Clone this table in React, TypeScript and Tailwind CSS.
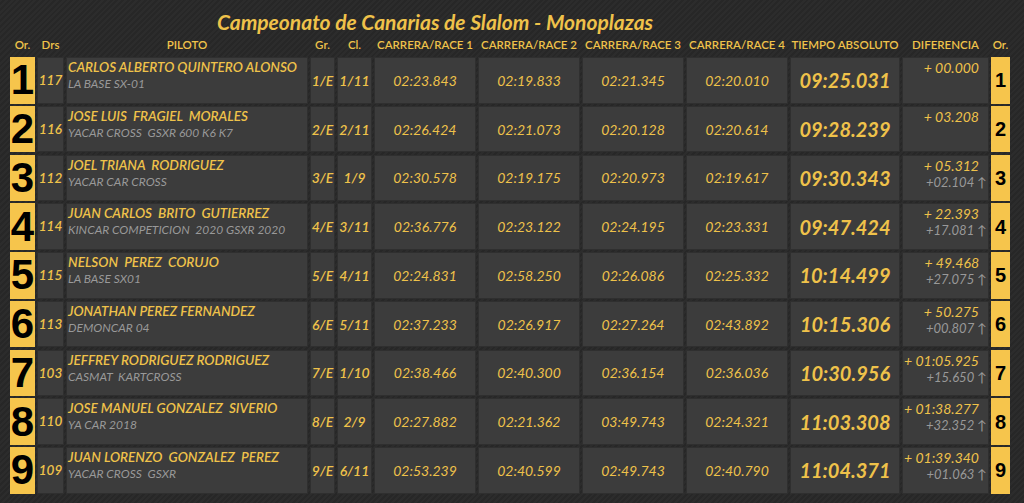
import React from 'react';

interface Row {
  pos: number;
  drs: string;
  name: string;
  car: string;
  gr: string;
  cl: string;
  races: string[];
  total: string;
  diff: string;
  prev?: string;
}

const rows: Row[] = [
  { pos: 1, drs: '117', name: 'CARLOS ALBERTO QUINTERO ALONSO', car: 'LA BASE SX-01', gr: '1/E', cl: '1/11', races: ['02:23.843', '02:19.833', '02:21.345', '02:20.010'], total: '09:25.031', diff: '+ 00.000' },
  { pos: 2, drs: '116', name: 'JOSE LUIS  FRAGIEL  MORALES', car: 'YACAR CROSS  GSXR 600 K6 K7', gr: '2/E', cl: '2/11', races: ['02:26.424', '02:21.073', '02:20.128', '02:20.614'], total: '09:28.239', diff: '+ 03.208' },
  { pos: 3, drs: '112', name: 'JOEL TRIANA  RODRIGUEZ', car: 'YACAR CAR CROSS', gr: '3/E', cl: '1/9', races: ['02:30.578', '02:19.175', '02:20.973', '02:19.617'], total: '09:30.343', diff: '+ 05.312', prev: '+02.104' },
  { pos: 4, drs: '114', name: 'JUAN CARLOS  BRITO  GUTIERREZ', car: 'KINCAR COMPETICION  2020 GSXR 2020', gr: '4/E', cl: '3/11', races: ['02:36.776', '02:23.122', '02:24.195', '02:23.331'], total: '09:47.424', diff: '+ 22.393', prev: '+17.081' },
  { pos: 5, drs: '115', name: 'NELSON  PEREZ  CORUJO', car: 'LA BASE SX01', gr: '5/E', cl: '4/11', races: ['02:24.831', '02:58.250', '02:26.086', '02:25.332'], total: '10:14.499', diff: '+ 49.468', prev: '+27.075' },
  { pos: 6, drs: '113', name: 'JONATHAN PEREZ FERNANDEZ', car: 'DEMONCAR 04', gr: '6/E', cl: '5/11', races: ['02:37.233', '02:26.917', '02:27.264', '02:43.892'], total: '10:15.306', diff: '+ 50.275', prev: '+00.807' },
  { pos: 7, drs: '103', name: 'JEFFREY RODRIGUEZ RODRIGUEZ', car: 'CASMAT  KARTCROSS', gr: '7/E', cl: '1/10', races: ['02:38.466', '02:40.300', '02:36.154', '02:36.036'], total: '10:30.956', diff: '+ 01:05.925', prev: '+15.650' },
  { pos: 8, drs: '110', name: 'JOSE MANUEL GONZALEZ  SIVERIO', car: 'YA CAR 2018', gr: '8/E', cl: '2/9', races: ['02:27.882', '02:21.362', '03:49.743', '02:24.321'], total: '11:03.308', diff: '+ 01:38.277', prev: '+32.352' },
  { pos: 9, drs: '109', name: 'JUAN LORENZO  GONZALEZ  PEREZ', car: 'YACAR CROSS  GSXR', gr: '9/E', cl: '6/11', races: ['02:53.239', '02:40.599', '02:49.743', '02:40.790'], total: '11:04.371', diff: '+ 01:39.340', prev: '+01.063' },
];

const cols = 'grid grid-cols-[25px_27px_242px_25px_35px_102px_102px_102px_102px_110px_87px_19px] gap-x-[2px]';
const cell = 'bg-[#3c3c3c] border border-[#2f2f2f] h-full';

export default function App() {
  return (
    <div className="w-[1024px] h-[503px] overflow-hidden bg-[#2a2a2a] bg-[repeating-linear-gradient(135deg,#2c2c2c_0px,#2c2c2c_2px,#272727_2px,#272727_4px)] font-['Lato',sans-serif] text-[#efc24a] pt-[9px]">
      <div className="w-[870px] text-center text-[21px] leading-[26px] font-bold italic">
        Campeonato de Canarias de Slalom - Monoplazas
      </div>

      <div className={`${cols} ml-[10px] h-[20px] items-center text-[11.5px] font-semibold text-center whitespace-nowrap`}>
        <div>Or.</div>
        <div>Drs</div>
        <div>PILOTO</div>
        <div>Gr.</div>
        <div>Cl.</div>
        <div>CARRERA/RACE 1</div>
        <div>CARRERA/RACE 2</div>
        <div>CARRERA/RACE 3</div>
        <div>CARRERA/RACE 4</div>
        <div>TIEMPO ABSOLUTO</div>
        <div>DIFERENCIA</div>
        <div>Or.</div>
      </div>

      <div className="ml-[10px] mt-[2px] flex flex-col gap-y-[2.25px]">
        {rows.map((r) => (
          <div key={r.pos} className={`${cols} h-[46.5px]`}>
            <div className="bg-[#f6c54c] h-full flex items-center justify-center text-black font-bold text-[42px] leading-[40px] font-['Liberation_Sans',Arial,sans-serif]">
              {r.pos}
            </div>
            <div className={`${cell} flex items-center justify-center italic font-semibold text-[13.5px]`}>{r.drs}</div>
            <div className={`${cell} px-[1px] italic whitespace-pre`}>
              <div className="text-[13.5px] leading-[16px] mt-[1px] font-semibold">{r.name}</div>
              <div className="text-[12px] leading-[15px] mt-[1px] text-[#999999]">{r.car}</div>
            </div>
            <div className={`${cell} flex items-center justify-center italic font-semibold text-[14px]`}>{r.gr}</div>
            <div className={`${cell} flex items-center justify-center italic font-semibold text-[14px]`}>{r.cl}</div>
            {r.races.map((t, i) => (
              <div key={i} className={`${cell} flex items-center justify-center italic text-[14px]`}>{t}</div>
            ))}
            <div className={`${cell} flex items-center justify-center italic font-bold text-[20px]`}>{r.total}</div>
            <div className={`${cell} italic text-right`}>
              <div className="text-[14px] leading-[16px] mt-[2px] pr-[9px]">{r.diff}</div>
              {r.prev && (
                <div className="text-[13px] leading-[15px] mt-[1px] pr-[1px] text-[#999999]">
                  {r.prev} <span className="not-italic">↑</span>
                </div>
              )}
            </div>
            <div className="bg-[#f6c54c] h-full flex items-center justify-center text-black font-bold text-[20px] leading-none font-['Liberation_Sans',Arial,sans-serif]">
              {r.pos}
            </div>
          </div>
        ))}
      </div>
    </div>
  );
}
